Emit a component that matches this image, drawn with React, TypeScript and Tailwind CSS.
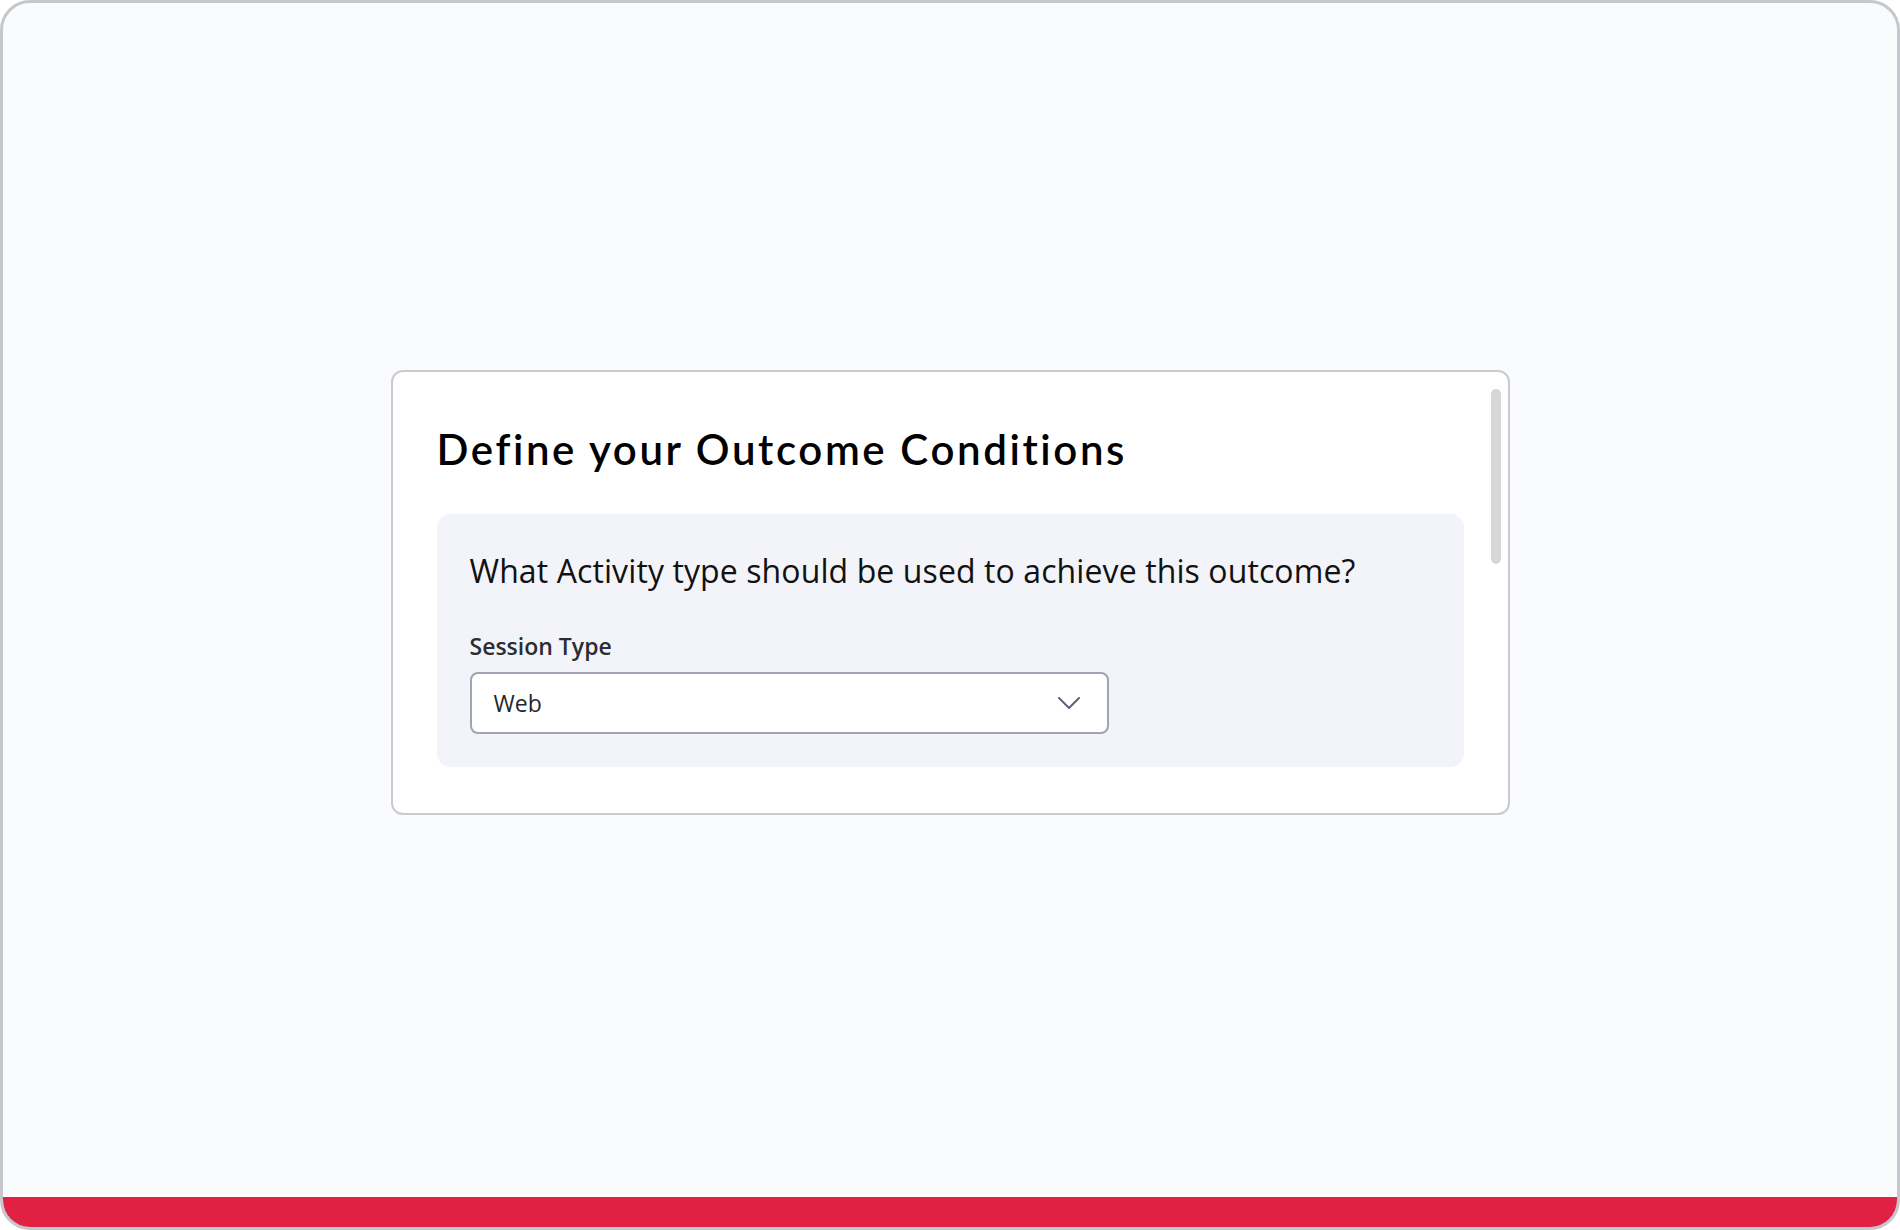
import React from "react";

export default function App() {
  return (
    <div className="w-full h-[1230px] bg-white">
      <div className="flex h-full w-full flex-col overflow-hidden rounded-[30px] border-[3px] border-[#c6c7cc] bg-[#fafbfd]">
        <main className="flex flex-1 items-center justify-center pb-[15px]">
          <div className="relative w-[1119px] rounded-[12px] border-2 border-[#cacbd0] bg-white px-[44px] pt-[52px] pb-[46px]">
            <div className="absolute right-[7px] top-[17px] h-[175px] w-[10px] rounded-full bg-[#d6d6d6]" />
            <h1
              className="text-[42px] leading-[50px] font-semibold text-black tracking-[2.6px]"
              style={{ fontFamily: "Lato, 'Open Sans', sans-serif" }}
            >
              Define your Outcome Conditions
            </h1>
            <section
              className="mt-[40px] rounded-[14px] bg-[#f3f4f9] px-[33px] pt-[35px] pb-[33px]"
              style={{ fontFamily: "'Open Sans', 'Noto Sans', sans-serif" }}
            >
              <p className="text-[32px] leading-[44px] tracking-[0.1px] text-[#111111]">
                What Activity type should be used to achieve this outcome?
              </p>
              <label className="mt-[38px] block text-[23px] leading-[31px] font-semibold text-[#2a2d33]">
                Session Type
              </label>
              <div className="mt-[10px] flex h-[62px] w-[639px] items-center justify-between rounded-[8px] border-2 border-[#9fa5b2] bg-white pl-[22px] pr-[27px]">
                <span className="text-[23px] text-[#23262b]">Web</span>
                <svg width="22" height="13" viewBox="0 0 22 13" fill="none">
                  <polyline
                    points="1,1 11,11 21,1"
                    stroke="#5b6478"
                    strokeWidth="2"
                    strokeLinecap="round"
                    strokeLinejoin="round"
                  />
                </svg>
              </div>
            </section>
          </div>
        </main>
        <div className="h-[30px] w-full bg-[#e02144]" />
      </div>
    </div>
  );
}
